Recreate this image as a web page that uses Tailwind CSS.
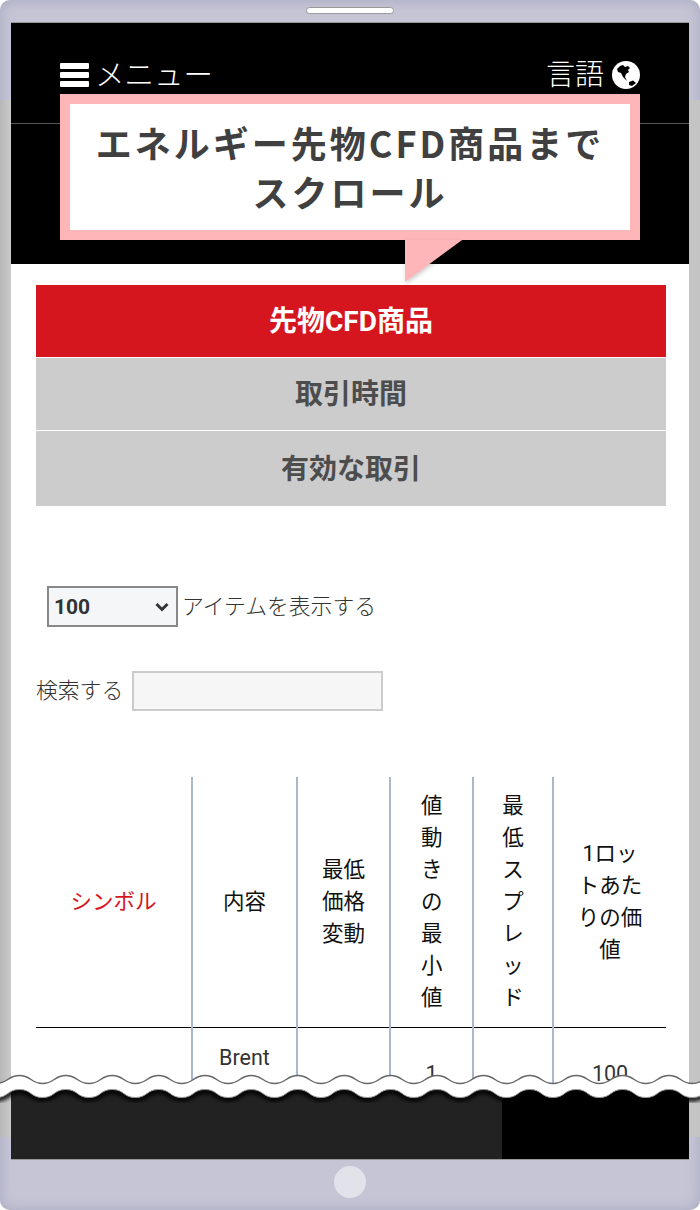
<!DOCTYPE html>
<html lang="ja">
<head>
<meta charset="utf-8">
<title>先物CFD商品</title>
<script src="https://cdn.jsdelivr.net/npm/@tailwindcss/browser@4"></script>
</head>
<body class="bg-white">
<!-- phone frame -->
<div class="relative w-[700px] h-[1210px] overflow-hidden rounded-[10px] bg-[#c5c5d6] shadow-[inset_0_0_14px_#a9a9c0] font-['Roboto','Noto_Sans_CJK_JP',sans-serif]">
    <div class="absolute left-0 top-[100px] w-[11px] h-[1037px] bg-gradient-to-r from-[#b8b8b8] to-[#cacaca]"></div>
    <div class="absolute right-0 top-[100px] w-[11px] h-[1037px] bg-[#c4c4c4]"></div>
    <div class="absolute left-[306px] top-[7px] w-[88px] h-[7px] rounded-full bg-white border border-[#999]"></div>
    <div class="absolute left-[334px] top-[1166px] w-[32px] h-[32px] rounded-full bg-[#e2e3ea]"></div>

    <!-- screen -->
    <div class="absolute left-[11px] top-[22px] w-[678px] h-[1138px] flex flex-col overflow-hidden border-y border-[#999] bg-white">
        <!-- header -->
        <div class="h-[241px] shrink-0 bg-black">
            <div class="h-[101px] px-[49px] pt-[33px] flex justify-between items-start border-b border-[#555] text-white">
                <div class="flex items-center gap-[6px] h-[38px]">
                    <div class="w-[29px] flex flex-col gap-[3px]">
                        <span class="h-[6px] rounded-[1px] bg-white"></span>
                        <span class="h-[6px] rounded-[1px] bg-white"></span>
                        <span class="h-[6px] rounded-[1px] bg-white"></span>
                    </div>
                    <span class="text-[29.5px] leading-[38px] font-light">メニュー</span>
                </div>
                <div class="flex items-center gap-[8px] h-[38px]">
                    <span class="text-[29px] leading-[38px] font-light">言語</span>
                    <svg class="w-[28px] h-[28px]" viewBox="0 0 28 28">
                        <circle cx="14" cy="14" r="14" fill="#fff"/>
                        <path d="M5 8 L8 5 L11 4 L13 6 L16 5 L18 7 L16 9 L17 11 L14 13 L13 16 L15 20 L11 16 L9 12 L6 11 Z" fill="#000"/>
                        <path d="M17 21 L21 19.500 L24 22 L20 25 L17 24 Z" fill="#000"/>
                    </svg>
                </div>
            </div>
        </div>

        <!-- content -->
        <div class="pl-[25px] pr-[23px] pt-[21px] grow">
            <div class="flex flex-col gap-px">
                <div class="h-[72px] pt-[2px] flex items-center justify-center bg-[#d6161f] text-white text-[28px] font-bold">先物CFD商品</div>
                <div class="h-[72px] pt-[2px] flex items-center justify-center bg-[#cccccc] text-[#4d4d4d] text-[28px] font-bold">取引時間</div>
                <div class="h-[75px] pt-[2px] flex items-center justify-center bg-[#cccccc] text-[#4d4d4d] text-[28px] font-bold">有効な取引</div>
            </div>

            <div class="mt-[80px] ml-[11px] flex items-center gap-[4px] h-[41px] text-[21.8px] font-light text-[#333]">
                <div class="relative w-[131px] h-[41px]">
                    <select class="appearance-none w-full h-full pl-[5px] pt-[2px] border-2 border-[#888] bg-[#f5f6f8] text-[21px] font-bold text-[#333]">
                        <option>100</option>
                    </select>
                    <svg class="absolute right-[9px] top-[16px] w-[14px] h-[10px] pointer-events-none" viewBox="0 0 14 10">
                        <path d="M1.500 2 L7 7.500 L12.500 2" fill="none" stroke="#333" stroke-width="3"/>
                    </svg>
                </div>
                <span class="pt-[2px]">アイテムを表示する</span>
            </div>

            <div class="mt-[44px] flex items-center gap-[9px] text-[21.8px] font-light text-[#333]">
                <span>検索する</span>
                <input type="text" class="w-[251px] h-[40px] border-2 border-[#ccc] bg-[#f6f6f6]">
            </div>

            <table class="mt-[66px] w-[630px] table-fixed border-collapse text-[21.5px] leading-[32px] text-center text-[#111]">
                <thead>
                    <tr class="h-[250px] border-b border-black">
                        <th class="w-[156px] border-r-2 border-[#a9b7ca] font-normal text-[#d6161f]">シンボル</th>
                        <th class="w-[105px] border-r-2 border-[#a9b7ca] font-normal">内容</th>
                        <th class="w-[93px] border-r-2 border-[#a9b7ca] font-normal px-[22px]">最低価格変動</th>
                        <th class="w-[83px] border-r-2 border-[#a9b7ca] font-normal px-[30px]">値動きの最小値</th>
                        <th class="w-[80px] border-r-2 border-[#a9b7ca] font-normal px-[28px]">最低スプレッド</th>
                        <th class="font-normal px-[20px]">1ロットあたりの価値</th>
                    </tr>
                </thead>
                <tbody>
                    <tr class="h-[100px] align-top text-[#333]">
                        <td class="border-r-2 border-[#a9b7ca]"></td>
                        <td class="border-r-2 border-[#a9b7ca] pt-[14px]">Brent</td>
                        <td class="border-r-2 border-[#a9b7ca]"></td>
                        <td class="border-r-2 border-[#a9b7ca] pt-[30px]">1</td>
                        <td class="border-r-2 border-[#a9b7ca]"></td>
                        <td class="pt-[30px]">100</td>
                    </tr>
                </tbody>
            </table>
        </div>
    </div>

    <!-- footer under the torn edge -->
    <div class="absolute left-[11px] top-[1085px] w-[678px] h-[74px] flex">
        <div class="w-[491px] bg-[#222]"></div>
        <div class="grow bg-black"></div>
    </div>

    <!-- torn edge -->
    <svg class="absolute left-0 top-[1070px] w-[700px] h-[40px]" viewBox="0 0 700 40">
        <defs><filter id="b" x="-5%" y="-50%" width="110%" height="200%"><feGaussianBlur stdDeviation="2"/></filter></defs>
        <path filter="url(#b)" d="M-27 21c12 0 11.200 8 23.200 8s11.200-8 23.200-8c12 0 11.200 8 23.200 8s11.200-8 23.200-8c12 0 11.200 8 23.200 8s11.200-8 23.200-8c12 0 11.200 8 23.200 8s11.200-8 23.200-8c12 0 11.200 8 23.200 8s11.200-8 23.200-8c12 0 11.200 8 23.200 8s11.200-8 23.200-8c12 0 11.200 8 23.200 8s11.200-8 23.200-8c12 0 11.200 8 23.200 8s11.200-8 23.200-8c12 0 11.200 8 23.200 8s11.200-8 23.200-8c12 0 11.200 8 23.200 8s11.200-8 23.200-8c12 0 11.200 8 23.200 8s11.200-8 23.200-8c12 0 11.200 8 23.200 8s11.200-8 23.200-8c12 0 11.200 8 23.200 8s11.200-8 23.200-8c12 0 11.200 8 23.200 8s11.200-8 23.200-8c12 0 11.200 8 23.200 8s11.200-8 23.200-8c12 0 11.200 8 23.200 8s11.200-8 23.200-8" fill="none" stroke="#000" stroke-width="5"/>
        <path d="M-27 5.500c12 0 11.200 8 23.200 8s11.200-8 23.200-8c12 0 11.200 8 23.200 8s11.200-8 23.200-8c12 0 11.200 8 23.200 8s11.200-8 23.200-8c12 0 11.200 8 23.200 8s11.200-8 23.200-8c12 0 11.200 8 23.200 8s11.200-8 23.200-8c12 0 11.200 8 23.200 8s11.200-8 23.200-8c12 0 11.200 8 23.200 8s11.200-8 23.200-8c12 0 11.200 8 23.200 8s11.200-8 23.200-8c12 0 11.200 8 23.200 8s11.200-8 23.200-8c12 0 11.200 8 23.200 8s11.200-8 23.200-8c12 0 11.200 8 23.200 8s11.200-8 23.200-8c12 0 11.200 8 23.200 8s11.200-8 23.200-8c12 0 11.200 8 23.200 8s11.200-8 23.200-8c12 0 11.200 8 23.200 8s11.200-8 23.200-8c12 0 11.200 8 23.200 8s11.200-8 23.200-8c12 0 11.200 8 23.200 8s11.200-8 23.200-8v14c-12 0-11.200 8-23.200 8s-11.200-8-23.200-8c-12 0-11.200 8-23.200 8s-11.200-8-23.200-8c-12 0-11.200 8-23.200 8s-11.200-8-23.200-8c-12 0-11.200 8-23.200 8s-11.200-8-23.200-8c-12 0-11.200 8-23.200 8s-11.200-8-23.200-8c-12 0-11.200 8-23.200 8s-11.200-8-23.200-8c-12 0-11.200 8-23.200 8s-11.200-8-23.200-8c-12 0-11.200 8-23.200 8s-11.200-8-23.200-8c-12 0-11.200 8-23.200 8s-11.200-8-23.200-8c-12 0-11.200 8-23.200 8s-11.200-8-23.200-8c-12 0-11.200 8-23.200 8s-11.200-8-23.200-8c-12 0-11.200 8-23.200 8s-11.200-8-23.200-8c-12 0-11.200 8-23.200 8s-11.200-8-23.200-8c-12 0-11.200 8-23.200 8s-11.200-8-23.200-8c-12 0-11.200 8-23.200 8s-11.200-8-23.200-8c-12 0-11.200 8-23.200 8s-11.200-8-23.200-8z" fill="#fff"/>
        <path d="M-27 5.500c12 0 11.200 8 23.200 8s11.200-8 23.200-8c12 0 11.200 8 23.200 8s11.200-8 23.200-8c12 0 11.200 8 23.200 8s11.200-8 23.200-8c12 0 11.200 8 23.200 8s11.200-8 23.200-8c12 0 11.200 8 23.200 8s11.200-8 23.200-8c12 0 11.200 8 23.200 8s11.200-8 23.200-8c12 0 11.200 8 23.200 8s11.200-8 23.200-8c12 0 11.200 8 23.200 8s11.200-8 23.200-8c12 0 11.200 8 23.200 8s11.200-8 23.200-8c12 0 11.200 8 23.200 8s11.200-8 23.200-8c12 0 11.200 8 23.200 8s11.200-8 23.200-8c12 0 11.200 8 23.200 8s11.200-8 23.200-8c12 0 11.200 8 23.200 8s11.200-8 23.200-8c12 0 11.200 8 23.200 8s11.200-8 23.200-8c12 0 11.200 8 23.200 8s11.200-8 23.200-8c12 0 11.200 8 23.200 8s11.200-8 23.200-8" fill="none" stroke="#666" stroke-width="1.500"/>
        <path d="M-27 19.500c12 0 11.200 8 23.200 8s11.200-8 23.200-8c12 0 11.200 8 23.200 8s11.200-8 23.200-8c12 0 11.200 8 23.200 8s11.200-8 23.200-8c12 0 11.200 8 23.200 8s11.200-8 23.200-8c12 0 11.200 8 23.200 8s11.200-8 23.200-8c12 0 11.200 8 23.200 8s11.200-8 23.200-8c12 0 11.200 8 23.200 8s11.200-8 23.200-8c12 0 11.200 8 23.200 8s11.200-8 23.200-8c12 0 11.200 8 23.200 8s11.200-8 23.200-8c12 0 11.200 8 23.200 8s11.200-8 23.200-8c12 0 11.200 8 23.200 8s11.200-8 23.200-8c12 0 11.200 8 23.200 8s11.200-8 23.200-8c12 0 11.200 8 23.200 8s11.200-8 23.200-8c12 0 11.200 8 23.200 8s11.200-8 23.200-8c12 0 11.200 8 23.200 8s11.200-8 23.200-8c12 0 11.200 8 23.200 8s11.200-8 23.200-8" fill="none" stroke="#999" stroke-width="1"/>
    </svg>

    <!-- callout -->
    <div class="absolute left-[60px] top-[94px] w-[580px] h-[146px] border-[10px] border-[#ffb6b9] bg-white flex items-center justify-center text-center text-[36px] leading-[49px] tracking-[3px] font-bold text-[#404040] font-['Noto_Sans_CJK_JP',sans-serif]">
        <p class="w-[540px]">エネルギー先物CFD商品まで<br>スクロール</p>
    </div>
    <svg class="absolute left-[405px] top-[240px] w-[58px] h-[42px] drop-shadow-[1px_2px_2px_rgba(0,0,0,0.2)]" viewBox="0 0 58 42"><polygon points="0,0 57,0 0,42" fill="#ffb6b9"/></svg>
</div>
</body>
</html>
